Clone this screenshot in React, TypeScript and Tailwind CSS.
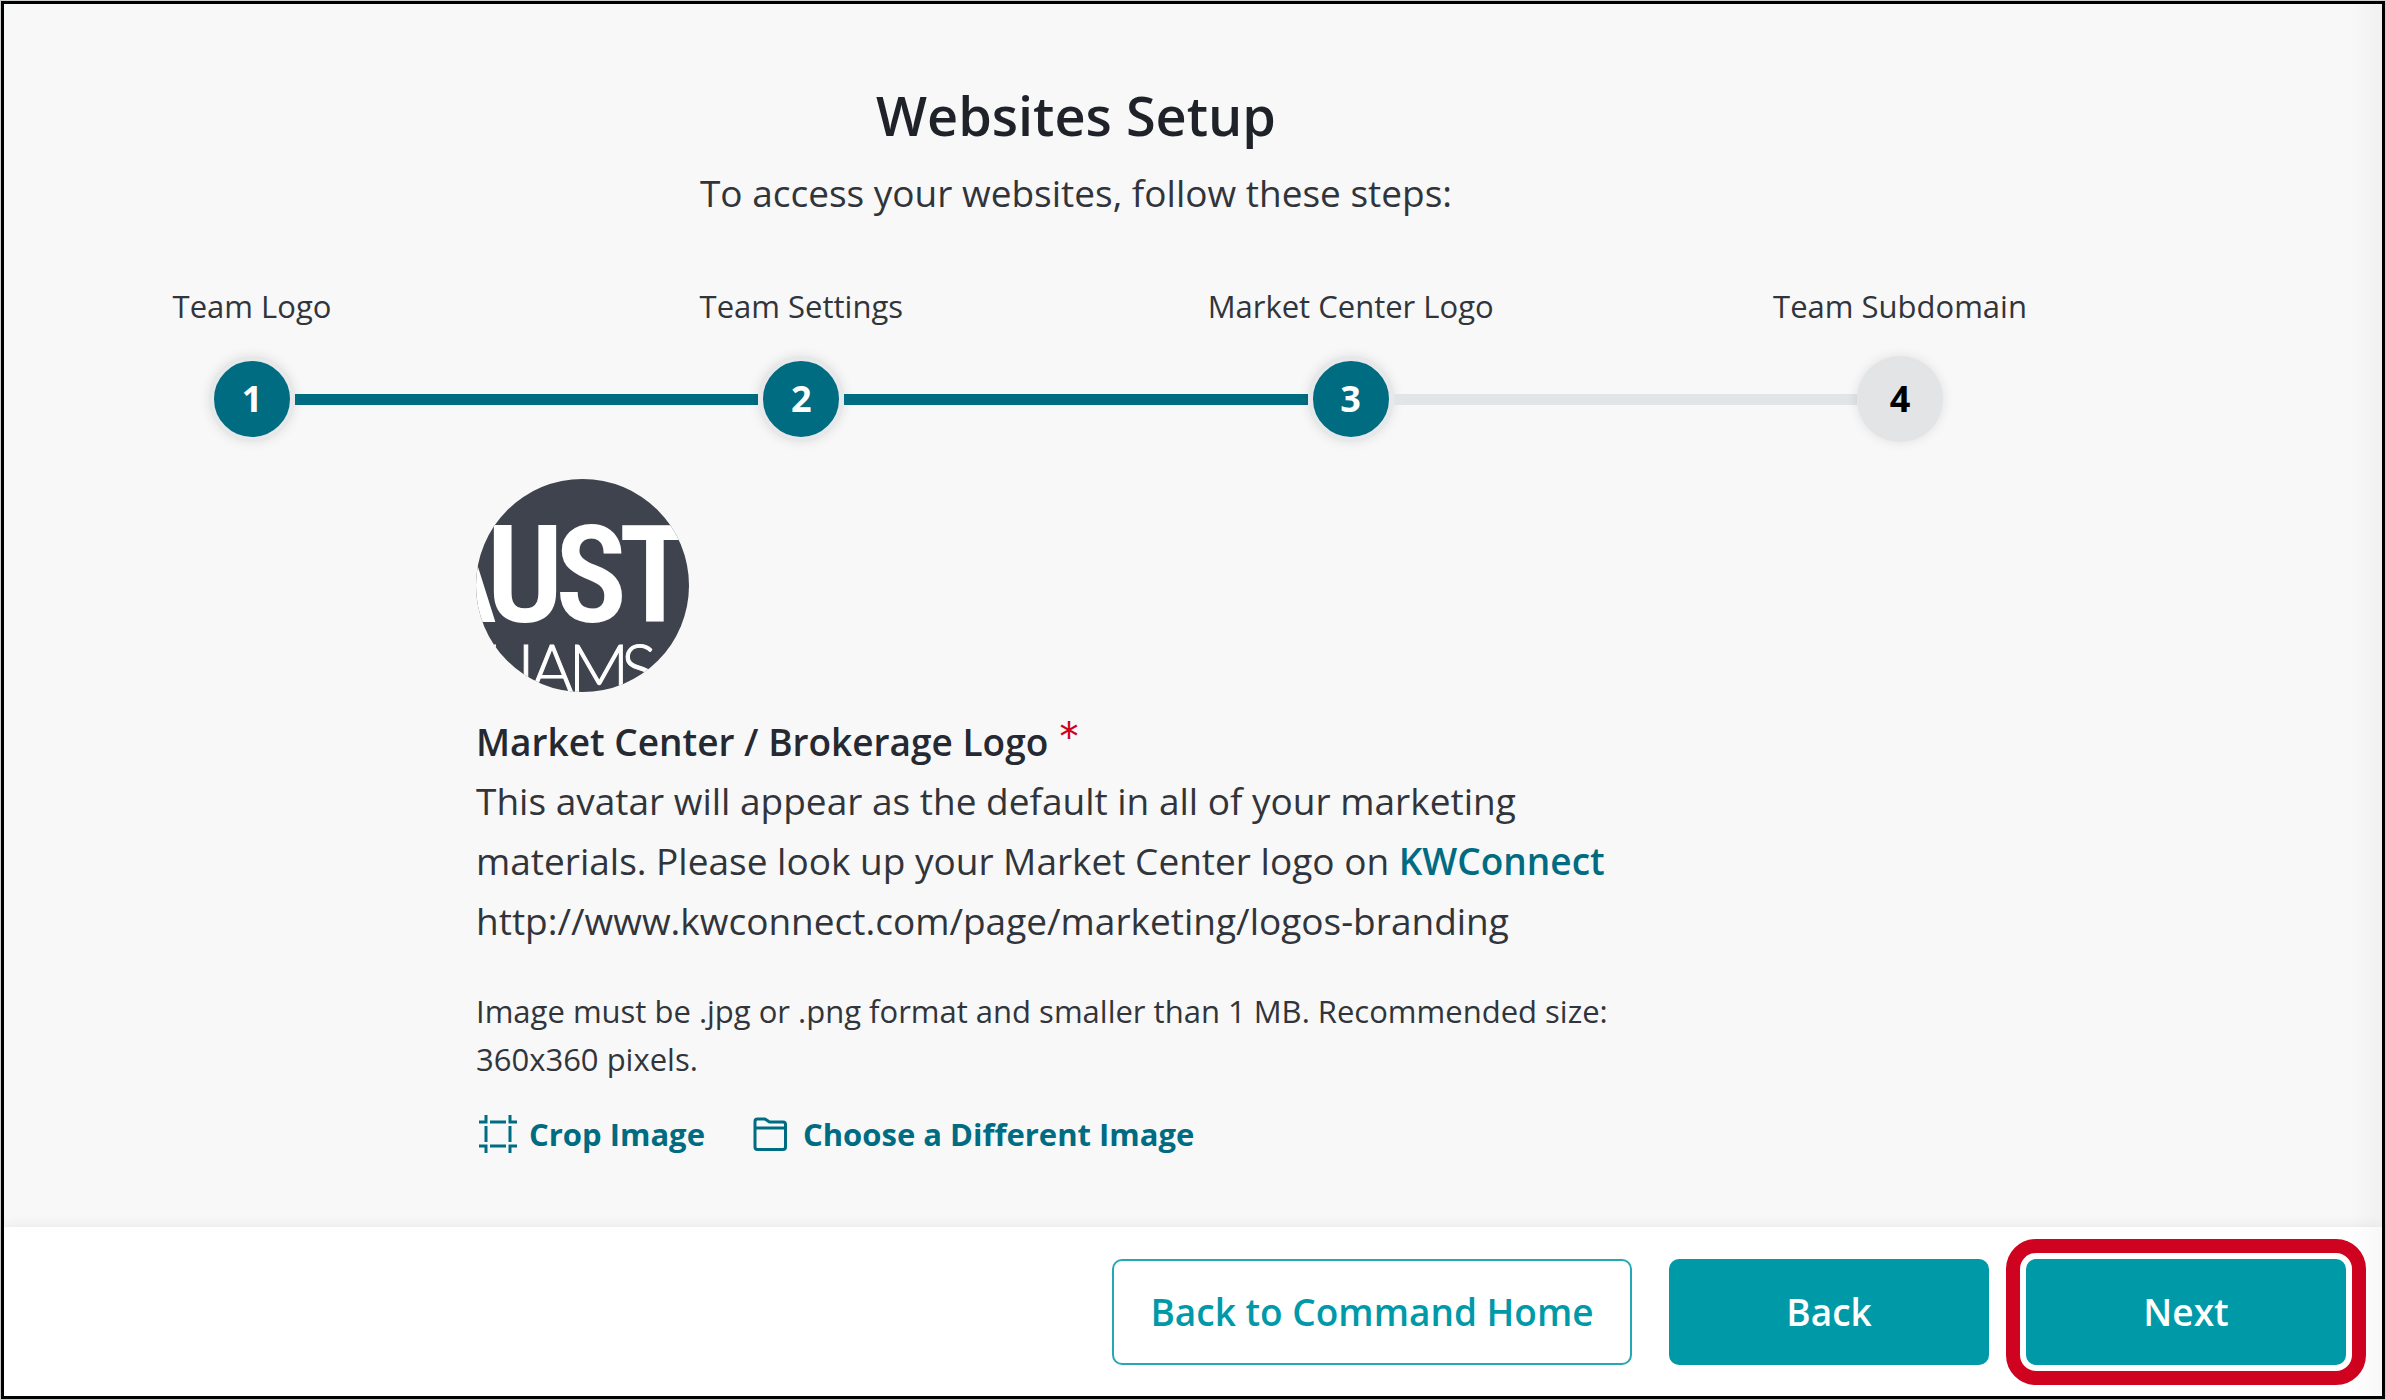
import React from "react";

const steps = [
  { id: 1, label: "Team Logo", done: true },
  { id: 2, label: "Team Settings", done: true },
  { id: 3, label: "Market Center Logo", done: true },
  { id: 4, label: "Team Subdomain", done: false },
];

function CropIcon() {
  return (
    <svg width="38" height="38" viewBox="0 0 38 38" fill="none" stroke="currentColor" strokeWidth="3">
      <path d="M0 7H7V0M31 0V7H38M38 31H31V38M7 38V31H0" />
      <path d="M11 7H27M11 31H27M7 11V27M31 11V27" />
    </svg>
  );
}

function FolderIcon() {
  return (
    <svg width="34" height="34" viewBox="0 0 34 34" fill="none" stroke="currentColor" strokeWidth="3" strokeLinejoin="round">
      <path d="M2 11V4.5A2.5 2.5 0 0 1 4.5 2H12l4.5 3H30a2.5 2.5 0 0 1 2.5 2.5V30a2.5 2.5 0 0 1-2.5 2.5H4.5A2.5 2.5 0 0 1 2 30V11H32" />
    </svg>
  );
}

function LogoAvatar() {
  return (
    <svg
      role="img"
      aria-label="Austin Keller Williams logo"
      className="size-[213px] rounded-full bg-[#3f434d]"
      viewBox="0 0 213 213"
      fill="#fff"
      textAnchor="middle"
    >
      <text x="-19 49 115 179" y="143" fontSize="135" fontWeight="600" fontFamily="'Roboto Condensed', Roboto, sans-serif">
        AUST
      </text>
      <text x="26 50 76 123 163" y="214" fontSize="67" fontWeight="300" fontFamily="Lato, sans-serif" stroke="#fff">
        LIAMS
      </text>
    </svg>
  );
}

export default function App() {
  return (
    <div className="min-h-screen flex bg-[#cdd1ce] p-px font-['Open_Sans',sans-serif] text-[#31353b]">
      <div className="relative flex-1 flex flex-col border-3 border-black bg-[#f8f8f8]">
        <main className="pt-[79px] pb-10 pr-[234px]">
          {/* Heading */}
          <div className="text-center">
            <h1 className="text-[54px] leading-16 font-semibold text-[#1f2329]">
              Websites Setup
            </h1>
            <p className="mt-[18px] text-[37px] leading-14">
              To access your websites, follow these steps:
            </p>
          </div>

          {/* Stepper */}
          <div className="mt-[61px]">
            <div className="flex justify-between px-[98px] text-[31px] leading-12">
              {steps.map((step) => (
                <span key={step.id} className="w-[300px] text-center">
                  {step.label}
                </span>
              ))}
            </div>

            <ol className="mt-[26px] flex items-center px-[205px]">
              {steps.map((step, i) => (
                <React.Fragment key={step.id}>
                  {i > 0 && (
                    <li
                      aria-hidden="true"
                      className={
                        step.done
                          ? "h-[11px] flex-1 bg-[#006c82]"
                          : "h-[11px] flex-1 bg-[#e3e4e6]"
                      }
                    />
                  )}
                  <li
                    className={
                      step.done
                        ? "size-[86px] flex items-center justify-center rounded-full border-[5px] border-[#e7e8ea] bg-[#006c82] text-[36px] font-bold text-white shadow-[0_0_12px_rgba(0,0,0,0.1)]"
                        : "size-[86px] flex items-center justify-center rounded-full bg-[#e3e4e6] text-[36px] font-bold text-black shadow-[0_0_12px_rgba(0,0,0,0.1)]"
                    }
                  >
                    {step.id}
                  </li>
                </React.Fragment>
              ))}
            </ol>
          </div>

          {/* Logo section */}
          <section className="mx-auto mt-[37px] max-w-[1200px]">
            <LogoAvatar />

            <h2 className="mt-[21px] text-[37px] leading-[58px] font-semibold text-[#252932]">
              Market Center / Brokerage Logo{" "}
              <span className="align-top font-['Inter',sans-serif] text-[44px] leading-12 font-light text-[#d0021b]">
                *
              </span>
            </h2>

            <p className="text-[37px] leading-[60px]">
              This avatar will appear as the default in all of your marketing
              <br />
              materials. Please look up your Market Center logo on{" "}
              <a href="http://www.kwconnect.com/page/marketing/logos-branding" className="font-semibold text-[#006c82]">
                KWConnect
              </a>
              <br />
              http://www.kwconnect.com/page/marketing/logos-branding
            </p>

            <p className="mt-9 text-[31px] leading-12">
              Image must be .jpg or .png format and smaller than 1 MB. Recommended size:
              <br />
              360x360 pixels.
            </p>

            <div className="mt-[27px] flex gap-12 pl-[3px] text-[31px] leading-12 font-bold text-[#006c82]">
              <button type="button" className="flex items-center gap-3">
                <CropIcon />
                Crop Image
              </button>
              <button type="button" className="flex items-center gap-4">
                <FolderIcon />
                Choose a Different Image
              </button>
            </div>
          </section>
        </main>

        {/* Footer */}
        <footer className="mt-auto flex justify-end gap-[37px] bg-white pt-8 pb-[31px] pr-9 text-[37px] font-semibold shadow-[0_0_14px_rgba(0,30,20,0.08)]">
          <button type="button" className="h-[106px] w-[520px] rounded-[10px] border-2 border-[#25a7b4] text-[#0099a8]">
            Back to Command Home
          </button>
          <button type="button" className="h-[106px] w-80 rounded-[10px] bg-[#0099a8] text-white">
            Back
          </button>
          <button
            type="button"
            className="h-[106px] w-80 rounded-[10px] bg-[#0099a8] text-white outline-[14px] outline-offset-6 outline-[#cf021f]"
          >
            Next
          </button>
        </footer>

        <div className="pointer-events-none absolute inset-y-0 right-0 w-8 bg-linear-to-r from-transparent to-black/3" />
      </div>
    </div>
  );
}
